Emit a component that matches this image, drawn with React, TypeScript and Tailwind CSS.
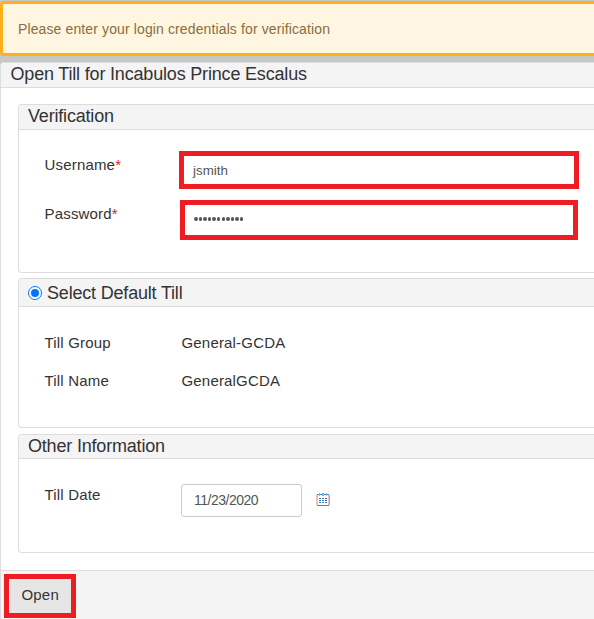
import type { ReactNode } from 'react';

function Section({ title, radio, className, headClass, children }: {
  title: string; radio?: boolean; className: string; headClass: string; children: ReactNode;
}) {
  return (
    <section className={`ml-[18px] rounded-l-[4px] border border-r-0 border-[#ddd] bg-white ${className}`}>
      <h2 className={`flex items-center rounded-tl-[3px] border-b border-[#ddd] bg-[#f4f4f4] pl-[9px] text-[18px] leading-[24px] tracking-[-0.19px] ${headClass}`}>
        {radio && (
          <span className="mr-[5px] flex h-[14px] w-[14px] items-center justify-center rounded-full border border-[#0075ff] bg-white">
            <span className="h-2 w-2 rounded-full bg-[#0075ff]" />
          </span>
        )}
        <span>{title}</span>
      </h2>
      {children}
    </section>
  );
}

function Label({ children, required }: { children: ReactNode; required?: boolean }) {
  return (
    <div className="w-[137px] shrink-0 text-[15px] leading-[20px] tracking-[0.18px]">
      {children}
      {required && <span className="text-[#e02020]">*</span>}
    </div>
  );
}

function CalendarIcon() {
  return (
    <svg width="14" height="14" viewBox="0 0 14 14" shapeRendering="crispEdges" className="ml-[14px] mt-[9px]">
      <rect x="0" y="2" width="1" height="10" fill="#f3c4bb" />
      <rect x="1" y="2" width="1" height="10" fill="#a9d0f0" />
      <rect x="12" y="2" width="1" height="10" fill="#f3c4bb" />
      <rect x="13" y="2" width="1" height="10" fill="#7db3e2" />
      <path d="M1 1h12v1H1zM1 12h12v1H1z" fill="#4a88c4" />
      <path d="M3 0h1v3H3zM6 0h2v3H6zM10 0h1v3h-1z" fill="#85b2dc" />
      <path d="M3 5h2v1H3zM6 5h2v1H6zM9 5h2v1H9zM3 7h2v1H3zM6 7h2v1H6zM9 7h2v1H9zM3 9h2v1H3zM6 9h2v1H6zM9 9h2v1H9z" fill="#3672b5" />
    </svg>
  );
}

export default function App() {
  return (
    <main className="flex h-[619px] w-[594px] flex-col overflow-hidden bg-[#c8c8c8] pt-px font-['Liberation_Sans',Arial,sans-serif] text-[#333]">
      <div className="flex h-[55px] shrink-0 items-center rounded-l-[4px] border-[3px] border-r-0 border-[#ffb01a] bg-[#fff6e2] pl-[15px] pt-[2px] text-[14px] tracking-[0.12px] text-[#8a6d3b]">
        Please enter your login credentials for verification
      </div>
      <div className="mt-[6px] flex h-[557px] shrink-0 flex-col rounded-tl-[4px] border-l border-t border-[#ddd] bg-white">
        <h1 className="h-[25px] shrink-0 rounded-tl-[3px] border-b border-[#ddd] bg-[#f4f4f4] pl-[9.5px] text-[18px] leading-[23px] tracking-[-0.18px]">
          Open Till for Incabulos Prince Escalus
        </h1>
        <div className="-ml-px pt-4">
          <Section title="Verification" className="h-[169px]" headClass="h-[25px] pb-[2px]">
            <div className="flex h-[49px] pl-[25.5px]">
              <div className="pt-[25px]"><Label required>Username</Label></div>
              <div className="-ml-[2.5px] mt-[21px] flex h-[38px] w-[400px] items-center border-[5px] border-[#ee1c23] bg-white pl-[9px] pt-[2px] text-[13.33px] text-[#555]">jsmith</div>
            </div>
            <div className="flex pl-[25.5px]">
              <div className="pt-[25px]"><Label required>Password</Label></div>
              <div className="-ml-[1.5px] mt-[21px] flex h-[40px] w-[398px] items-center border-[5px] border-[#ee1c23] bg-white pb-[2px] pl-[9px]">
                {Array.from({ length: 11 }, (_, i) => (
                  <span key={i} className="mr-[1.1px] h-[3.5px] w-[3.5px] rounded-full bg-[#555]" />
                ))}
              </div>
            </div>
          </Section>
          <Section title="Select Default Till" radio className="mt-[5px] h-[150px]" headClass="h-[28px]">
            <div className="flex flex-col gap-[18px] pl-[25.5px] pt-[26px] text-[15px] leading-[20px] tracking-[0.18px]">
              <div className="flex"><Label>Till Group</Label><span>General-GCDA</span></div>
              <div className="flex"><Label>Till Name</Label><span>GeneralGCDA</span></div>
            </div>
          </Section>
          <Section title="Other Information" className="mt-[6px] h-[119px]" headClass="h-[24px] pb-[2px]">
            <div className="flex pl-[25.5px] pt-[25px]">
              <div className="pt-px"><Label>Till Date</Label></div>
              <div className="-ml-[0.5px] flex h-[33px] w-[121px] items-center rounded-[3px] border border-[#ccc] pl-3 text-[14px] tracking-[-0.5px] text-[#555]">11/23/2020</div>
              <CalendarIcon />
            </div>
          </Section>
        </div>
        <footer className="mt-[17px] h-[49px] shrink-0 border-t border-[#ddd] bg-[#f4f4f4] pl-[3px] pt-[3px]">
          <button className="flex h-[44px] w-[72px] items-center border-[5px] border-[#ee1c23] bg-[#e6e6e6] pb-[2px] pl-[12.5px] text-[15px] leading-[20px] tracking-[0.18px]">Open</button>
        </footer>
      </div>
    </main>
  );
}
